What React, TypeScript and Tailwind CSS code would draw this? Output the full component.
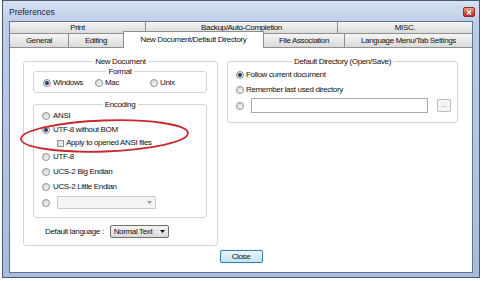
import React from "react";

function Radio({ checked = false }: { checked?: boolean }) {
  return (
    <span className="flex h-[8px] w-[8px] shrink-0 items-center justify-center rounded-full border border-[#8e8f8f] bg-gradient-to-br from-[#d4d4d4] to-[#fbfbfb]">
      {checked && <span className="h-[4px] w-[4px] rounded-full bg-[#243f66]" />}
    </span>
  );
}

function Check() {
  return (
    <span className="h-[7px] w-[7px] shrink-0 border border-[#8e8f8f] bg-gradient-to-br from-[#d8d8d8] to-[#fafafa]" />
  );
}

function Group({
  label,
  className,
  children,
}: {
  label: string;
  className: string;
  children?: React.ReactNode;
}) {
  return (
    <div className={`relative shrink-0 rounded-[3px] border border-[#d5d5d5] ${className}`}>
      <span className="absolute left-1/2 top-[-5px] -translate-x-1/2 whitespace-nowrap bg-white px-[2px] leading-[9px]">
        {label}
      </span>
      {children}
    </div>
  );
}

const tabBg = "bg-gradient-to-b from-[#f5f5f5] to-[#dadada] border-[#8e8f8f]";

export default function App() {
  return (
    <div className="relative h-[281px] w-[488px] overflow-hidden bg-white font-['Liberation_Sans',Arial,sans-serif] text-[8px] leading-none tracking-[-0.35px] text-[#111]">
      <div className="ml-[2px] flex h-[278px] w-[478px] flex-col border border-[#44587a] bg-[#aabedb]">
        {/* title bar */}
        <div className="flex h-[20px] shrink-0 items-center justify-between bg-gradient-to-b from-[#d6e2f2] to-[#bfcfe7] pl-[6px] pr-[4px] pt-[2px]">
          <span className="text-[8.5px] tracking-normal text-[#14284a]">Preferences</span>
          <span className="flex h-[10px] w-[12px] items-center justify-center rounded-[2px] border border-[#83332a] bg-gradient-to-b from-[#e9a393] via-[#d2594a] to-[#b93526]">
            <svg width="6" height="5" viewBox="0 0 6 5">
              <path d="M1 0.5 L5 4.5 M5 0.5 L1 4.5" stroke="white" strokeWidth="1.2" />
            </svg>
          </span>
        </div>
        {/* body */}
        <div className="flex flex-1 flex-col bg-gradient-to-b from-[#bccde6] to-[#a8bcda] px-[6px] pb-[4px]">
          <div className="flex flex-1 flex-col border border-[#5f7499] bg-white">
            {/* tab row 1 */}
            <div className="flex h-[11px] shrink-0">
              <div className={`flex w-[136px] items-center justify-center border-r ${tabBg}`}>Print</div>
              <div className={`flex w-[192px] items-center justify-center border-r ${tabBg}`}>
                Backup/Auto-Completion
              </div>
              <div className={`flex flex-1 items-center justify-center ${tabBg}`}>MISC.</div>
            </div>
            {/* tab row 2 */}
            <div className="flex h-[15px] shrink-0 items-end">
              <div className={`flex h-[15px] w-[59px] items-center justify-center border-y border-r ${tabBg}`}>
                General
              </div>
              <div className={`flex h-[15px] w-[54px] items-center justify-center border-y ${tabBg}`}>
                Editing
              </div>
              <div className="flex h-[17px] w-[141px] items-center justify-center border-x border-t border-[#8e8f8f] bg-white pb-[1px]">
                New Document/Default Directory
              </div>
              <div className={`flex h-[15px] w-[81px] items-center justify-center border-y border-r ${tabBg}`}>
                File Association
              </div>
              <div className={`flex h-[15px] flex-1 items-center justify-center border-y ${tabBg}`}>
                Language Menu/Tab Settings
              </div>
            </div>
            {/* panel */}
            <div className="flex flex-1 flex-col">
              <div className="flex items-start gap-[9px] pl-[13px] pt-[13px]">
                {/* New Document */}
                <Group label="New Document" className="h-[185px] w-[195px]">
                  <div className="flex flex-col pl-[9px] pt-[9px]">
                    <Group label="Format" className="h-[22px] w-[174px]">
                      <div className="flex h-full items-center pt-[2px]">
                        <div className="flex w-[61px] items-center gap-[2px] pl-[9px]">
                          <Radio checked />
                          <span>Windows</span>
                        </div>
                        <div className="flex w-[55px] items-center gap-[2px]">
                          <Radio />
                          <span>Mac</span>
                        </div>
                        <div className="flex items-center gap-[2px]">
                          <Radio />
                          <span>Unix</span>
                        </div>
                      </div>
                    </Group>
                    <Group label="Encoding" className="mt-[11px] h-[114px] w-[174px]">
                      <div className="flex flex-col pl-[8px] pt-[3px]">
                        <div className="flex h-[15px] items-center gap-[3px]">
                          <Radio />
                          <span>ANSI</span>
                        </div>
                        <div className="flex h-[14px] items-center gap-[3px]">
                          <Radio checked />
                          <span>UTF-8 without BOM</span>
                        </div>
                        <div className="flex h-[12px] items-center gap-[2px] pl-[15px]">
                          <Check />
                          <span>Apply to opened ANSI files</span>
                        </div>
                        <div className="flex h-[15px] items-center gap-[3px]">
                          <Radio />
                          <span>UTF-8</span>
                        </div>
                        <div className="flex h-[15px] items-center gap-[3px]">
                          <Radio />
                          <span>UCS-2 Big Endian</span>
                        </div>
                        <div className="flex h-[15px] items-center gap-[3px]">
                          <Radio />
                          <span>UCS-2 Little Endian</span>
                        </div>
                        <div className="flex h-[17px] items-center gap-[7px]">
                          <Radio />
                          <div className="flex h-[13px] w-[99px] items-center justify-end rounded-[1px] border border-[#c9c9c9] bg-[#f4f4f4] pr-[3px]">
                            <svg width="5" height="3" viewBox="0 0 5 3">
                              <path d="M0 0 L5 0 L2.5 3 Z" fill="#9a9a9a" />
                            </svg>
                          </div>
                        </div>
                      </div>
                    </Group>
                    <div className="mt-[7px] flex h-[13px] items-center gap-[6px] pl-[12px]">
                      <span>Default language :</span>
                      <div className="flex h-[13px] w-[59px] items-center justify-between rounded-[2px] border border-[#707070] bg-gradient-to-b from-[#f3f3f3] to-[#d9d9d9] pl-[3px] pr-[3px]">
                        <span>Normal Text</span>
                        <svg width="5" height="3" viewBox="0 0 5 3">
                          <path d="M0 0 L5 0 L2.5 3 Z" fill="#111" />
                        </svg>
                      </div>
                    </div>
                  </div>
                </Group>
                {/* Default Directory */}
                <Group label="Default Directory (Open/Save)" className="h-[62px] w-[231px]">
                  <div className="flex flex-col pl-[8px] pt-[5px]">
                    <div className="flex h-[15px] items-center gap-[2px]">
                      <Radio checked />
                      <span>Follow current document</span>
                    </div>
                    <div className="flex h-[15px] items-center gap-[2px]">
                      <Radio />
                      <span>Remember last used directory</span>
                    </div>
                    <div className="flex h-[17px] items-center">
                      <Radio />
                      <div className="ml-[7px] h-[15px] w-[177px] border border-[#a5a9ae] bg-white" />
                      <div className="ml-[9px] flex h-[13px] w-[14px] items-center justify-center rounded-[1px] border border-[#bdbdbd] bg-[#f4f4f4] pb-[2px] text-[#8a8a8a]">
                        ...
                      </div>
                    </div>
                  </div>
                </Group>
              </div>
              <div className="mt-[4px] flex justify-center">
                <div className="flex h-[13px] w-[43px] items-center justify-center rounded-[2px] border border-[#3c7fb1] bg-gradient-to-b from-[#eaf6fd] to-[#bde3f8] shadow-[0_0_1px_#6fb0da]">
                  Close
                </div>
              </div>
            </div>
          </div>
        </div>
      </div>
      {/* red annotation ellipse */}
      <svg className="pointer-events-none absolute left-0 top-0" width="488" height="281" viewBox="0 0 488 281">
        <ellipse
          cx="104.5"
          cy="136"
          rx="83.5"
          ry="15.5"
          transform="rotate(-2 104.5 136)"
          fill="none"
          stroke="#c62a2f"
          strokeWidth="1.8"
        />
      </svg>
    </div>
  );
}
